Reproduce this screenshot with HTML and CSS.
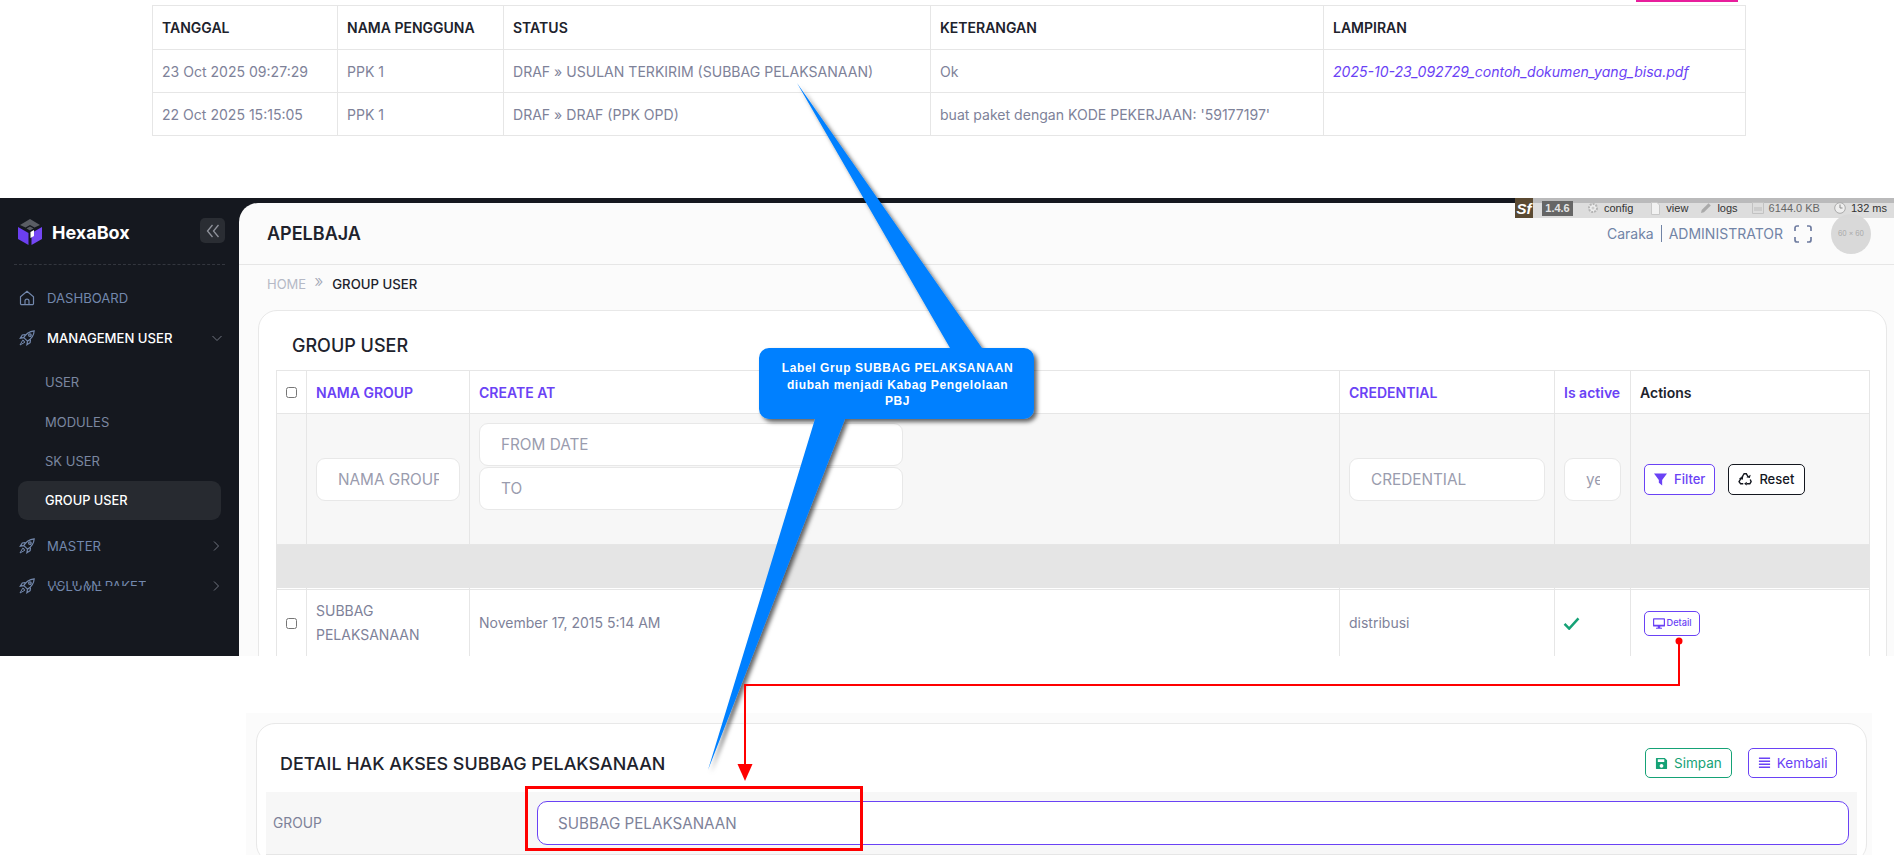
FILE: index.html
```html
<!DOCTYPE html>
<html lang="id">
<head>
<meta charset="utf-8">
<title>APELBAJA</title>
<link rel="stylesheet" href="styles.css">
</head>
<body>
<div class="page">
  <div class="pink-tab"></div>
  <section class="log-section">
    <table class="log">
      <thead>
        <tr><th class="lc1">TANGGAL</th><th class="lc2">NAMA PENGGUNA</th><th class="lc3">STATUS</th><th class="lc4">KETERANGAN</th><th class="lc5">LAMPIRAN</th></tr>
      </thead>
      <tbody>
        <tr><td>23 Oct 2025 09:27:29</td><td>PPK 1</td><td>DRAF » USULAN TERKIRIM (SUBBAG PELAKSANAAN)</td><td>Ok</td><td><a class="file">2025-10-23_092729_contoh_dokumen_yang_bisa.pdf</a></td></tr>
        <tr><td>22 Oct 2025 15:15:05</td><td>PPK 1</td><td>DRAF » DRAF (PPK OPD)</td><td>buat paket dengan KODE PEKERJAAN: '59177197'</td><td></td></tr>
      </tbody>
    </table>
  </section>

  <section class="app">
    <aside class="sidebar">
      <div class="brand">
        <svg class="logo" viewBox="0 0 24 26"><path d="M12 0l10 6-5.500 2.500L12 6 7.500 8.500 2 6z" fill="#5a5d64"/><path d="M12 7.500l3.500 2L12 11.500 8.500 9.500z" fill="#5a5d64"/><path d="M0 8l10.500 6v12L0 20z" fill="#6b3ff0"/><path d="M24 8l-10.500 6v12L24 20z" fill="#7447f5"/><path d="M16 11l-3.500 2v6l3.500-2z" fill="#fff"/></svg>
        <span class="brand-name">HexaBox</span>
        <span class="collapse"><svg viewBox="0 0 16 16"><path d="M7.500 2L2.500 8l5 6M13.500 2l-5 6 5 6" fill="none" stroke="#8f929b" stroke-width="1.300"/></svg></span>
      </div>
      <nav class="menu">
        <a class="item"><svg class="mi" viewBox="0 0 16 16"><path d="M1.500 6.800L8 1.300l6.500 5.500v6.700a1.200 1.200 0 0 1-1.200 1.200H2.700a1.200 1.200 0 0 1-1.200-1.200zM6 14.700v-3.500a2 2 0 0 1 4 0v3.500" fill="none" stroke="#7388ad" stroke-width="1.200"/></svg><span>DASHBOARD</span></a>
        <a class="item item-open"><svg class="mi" viewBox="0 0 16 16"><use href="#rocket"/></svg><span>MANAGEMEN USER</span><svg class="chev" viewBox="0 0 12 12"><path d="M1.500 4L6 8.500 10.500 4" fill="none" stroke="#70747f" stroke-width="1"/></svg></a>
        <a class="sub sub-first">USER</a>
        <a class="sub">MODULES</a>
        <a class="sub">SK USER</a>
        <a class="sub sub-on">GROUP USER</a>
        <a class="item item-master"><svg class="mi" viewBox="0 0 16 16"><use href="#rocket"/></svg><span>MASTER</span><svg class="chev" viewBox="0 0 12 12"><path d="M4 1.500L8.500 6 4 10.500" fill="none" stroke="#70747f" stroke-width="1"/></svg></a>
        <a class="item"><svg class="mi" viewBox="0 0 16 16"><use href="#rocket"/></svg>
          <span class="clash"><span class="clash-top">USULAN PAKET</span><span class="clash-bottom">VOLUME</span></span>
          <svg class="chev" viewBox="0 0 12 12"><path d="M4 1.500L8.500 6 4 10.500" fill="none" stroke="#70747f" stroke-width="1"/></svg></a>
      </nav>
      <svg class="defs" width="0" height="0"><defs><g id="rocket" fill="none" stroke="#7388ad" stroke-width="1.200"><path d="M4.800 7.600C7 3.300 10.500 1.300 15.200.8c-.3 4.500-2.500 8-6.700 10.300z"/><path d="M4.800 7.600L1.300 8.200l2-3.200 3-.4M8.500 11.100l-.6 3.600 3.200-2 .4-3"/><circle cx="10.900" cy="5.100" r="1.300"/><path d="M3.700 10.200l-2.700 4.800 4.800-2.700-.8-.3.300-1z" stroke-width="1"/></g></defs></svg>
    </aside>
    <main class="main">
      <header class="topbar">
        <h1 class="app-title">APELBAJA</h1>
        <div class="who">
          <span>Caraka</span><span class="pipe"></span><span>ADMINISTRATOR</span>
          <svg class="fs" viewBox="0 0 18 18"><path d="M1 6V3a2 2 0 0 1 2-2h2M13 1h2a2 2 0 0 1 2 2v3M17 12v3a2 2 0 0 1-2 2h-2M5 17H3a2 2 0 0 1-2-2v-3" fill="none" stroke="#6f7ca0" stroke-width="1.700"/></svg>
          <span class="avatar">60 × 60</span>
        </div>
      </header>
      <div class="crumbs"><span class="crumb-home">HOME</span><span class="crumb-sep">»</span><span class="crumb-now">GROUP USER</span></div>
      <div class="card group-card">
        <h2 class="card-title">GROUP USER</h2>
        <table class="grid">
          <thead>
            <tr class="head-row">
              <th class="g1"><span class="check"></span></th>
              <th class="g2 lnk">NAMA GROUP</th>
              <th class="g3 lnk">CREATE AT</th>
              <th class="g4"></th>
              <th class="g5 lnk">CREDENTIAL</th>
              <th class="g6 lnk">Is active</th>
              <th class="g7">Actions</th>
            </tr>
            <tr class="filter-row">
              <td></td>
              <td><div class="field"><span>NAMA GROUP</span></div></td>
              <td class="date-cell" colspan="2">
                <div class="field date"><span>FROM DATE</span></div>
                <div class="field date"><span>TO</span></div>
              </td>
              <td><div class="field"><span>CREDENTIAL</span></div></td>
              <td><div class="field"><span>yes</span></div></td>
              <td>
                <div class="actions">
                  <a class="btn btn-violet"><svg class="bi" viewBox="0 0 14 14"><path d="M0 .5h14L8.800 7.500V13.500L5.200 10.500V7.500z" fill="#6a42f5"/></svg>Filter</a>
                  <a class="btn btn-dark"><svg class="bi bi-recycle" viewBox="0 0 16 16"><path d="M4.500 6L7 2h2.500l2 3.500M14 8.500l1 2.500-1.500 2.500H10M6 13.500H3L1.200 11l2.300-4" fill="none" stroke="#14171f" stroke-width="1.600"/><path d="M9.500 6l4 .8 1-3.800zM10 11v4.500l-3-2.200zM1 7.500l4.500 1.300.5-4.100z" fill="#14171f"/></svg>Reset</a>
                </div>
              </td>
            </tr>
            <tr class="gray-row"><td colspan="7"></td></tr>
            <tr class="gap-row"><td></td><td></td><td colspan="2"></td><td></td><td></td><td></td></tr>
          </thead>
          <tbody>
            <tr class="data-row">
              <td><span class="check"></span></td>
              <td>SUBBAG PELAKSANAAN</td>
              <td colspan="2">November 17, 2015 5:14 AM</td>
              <td>distribusi</td>
              <td><svg class="tick" viewBox="0 0 18 14"><path d="M1.500 7.500L6.500 12.500 16.500 1.500" fill="none" stroke="#15a276" stroke-width="2.700"/></svg></td>
              <td><a class="btn btn-violet btn-sm"><svg class="bi-sm" viewBox="0 0 14 12"><path d="M1 0h12a1 1 0 0 1 1 1v7.500a1 1 0 0 1-1 1H1a1 1 0 0 1-1-1V1a1 1 0 0 1 1-1zM1.400 1.400v6.200h11.200V1.400zM3.500 11h7v1h-7zM5.500 9.500h3V11h-3z" fill="#6a42f5" fill-rule="evenodd"/></svg>Detail</a></td>
            </tr>
          </tbody>
        </table>
      </div>
    </main>
  </section>

  <section class="detail-wrap">
    <div class="card detail-card">
      <div class="detail-head">
        <h2 class="detail-title">DETAIL HAK AKSES SUBBAG PELAKSANAAN</h2>
        <div class="detail-btns">
          <a class="btn btn-green"><svg class="bi" viewBox="0 0 14 14"><path d="M1.500 1H10.500l2.500 2.500v9a.5.5 0 0 1-.5.5h-11a.5.5 0 0 1-.5-.5v-11a.5.5 0 0 1 .5-.5zM3 2.500V5.500h7V2.500zM7 7.500a2 2 0 1 0 .01 0z" fill="#15a276" fill-rule="evenodd"/></svg>Simpan</a>
          <a class="btn btn-violet btn-back"><svg class="bi" viewBox="0 0 14 14"><path d="M1 .5h12v1.700H1zM1 3.700h12v1.700H1zM1 6.900h12v1.700H1zM1 10.100h12v1.700H1z" fill="#6a42f5"/></svg>Kembali</a>
        </div>
      </div>
      <div class="detail-row">
        <span class="detail-label">GROUP</span>
        <div class="detail-input">SUBBAG PELAKSANAAN</div>
      </div>
    </div>
  </section>

  <div class="sf-bar">
    <span class="sf-logo">Sf</span>
    <span class="sf-ver">1.4.6</span>
    <span class="sf-item sf-first"><svg class="sf-ic" viewBox="0 0 12 12"><circle cx="6" cy="6" r="4" fill="#eee" stroke="#b5b5b5" stroke-width="2" stroke-dasharray="2 1"/><circle cx="6" cy="6" r="1.500" fill="#ccc"/></svg>config</span>
    <span class="sf-item sf-tight"><svg class="sf-ic sf-ic-narrow" viewBox="0 0 9 13"><path d="M.5.5h5.500l2.500 2.500v9.500H.5z" fill="#f2f2f2" stroke="#c8c8c8"/></svg>view</span>
    <span class="sf-item"><svg class="sf-ic" viewBox="0 0 12 12"><path d="M1 11l.7-3L8.500 1.200l2.300 2.300L4 10.300z" fill="#aaa"/></svg>logs</span>
    <span class="sf-item sf-dim"><svg class="sf-ic" viewBox="0 0 12 12"><path d="M.5.5h11v11H.5z" fill="#ddd" stroke="#c2c2c2"/><path d="M2 6h8M2 8h8" stroke="#bbb"/></svg>6144.0 KB</span>
    <span class="sf-item"><svg class="sf-ic" viewBox="0 0 12 12"><circle cx="6" cy="6" r="5.300" fill="#eee" stroke="#aaa"/><path d="M6 2.500V6h2.500" fill="none" stroke="#888"/></svg>132 ms</span>
  </div>

  <svg class="overlay" viewBox="0 0 1894 855">
    <defs>
      <filter id="callout-shadow" x="-10%" y="-10%" width="120%" height="120%">
        <feDropShadow dx="3" dy="3" stdDeviation="2.200" flood-color="#000" flood-opacity=".6"/>
      </filter>
    </defs>
    <path filter="url(#callout-shadow)" fill="#0080ff" d="M769 348H950L797 83 982 348H1024a10 10 0 0 1 10 10V409a10 10 0 0 1-10 10H845L708 770 815 419H769a10 10 0 0 1-10-10V358a10 10 0 0 1 10-10z"/>
    <g fill="#ff0000">
      <circle cx="1679" cy="641" r="3.500"/>
      <path d="M1678 641h2v45H746v78h-2V684h934z"/>
      <path d="M737.500 764h15L745 781z"/>
    </g>
    <rect x="526.500" y="787.500" width="335" height="62" fill="none" stroke="#ff0000" stroke-width="3"/>
  </svg>
  <div class="callout-text">Label Grup SUBBAG PELAKSANAAN<br>diubah menjadi Kabag Pengelolaan<br>PBJ</div>
</div>
</body>
</html>
```
FILE: styles.css
```css
* { box-sizing: border-box; }
html, body { margin: 0; padding: 0; background: #fff; }
body { font-family: Inter, "Liberation Sans", sans-serif; color: #181c32; }
.page { position: relative; width: 1894px; height: 855px; overflow: hidden; }
h1, h2 { margin: 0; font-weight: 500; }
a { text-decoration: none; }

.pink-tab { position: absolute; left: 1636px; top: 0; width: 102px; height: 1.500px; background: #e81e9c; }

/* top log table */
.log-section { padding: 5px 0 0 152px; height: 198px; }
.log { border-collapse: collapse; table-layout: fixed; width: 1593px; font-size: 14.060px; }
.log th, .log td { border: 1px solid #e6e6e6; padding: 0 9px; text-align: left; height: 43px; }
.log th { font-weight: 600; color: #20222c; height: 44px; font-size: 14px; }
.log td { color: #7e8299; }
.lc1 { width: 185px; }
.lc2 { width: 166px; }
.lc3 { width: 427px; }
.lc4 { width: 393px; }
.lc5 { width: 422px; }
.file { color: #6a42f5; font-style: italic; }

/* app */
.app { display: flex; height: 458px; background: #15181f; overflow: hidden; }
.sidebar { width: 239px; flex: none; padding: 20px 18px 0 14px; position: relative; }
.defs { position: absolute; }
.brand { display: flex; align-items: flex-start; height: 47px; border-bottom: 1px dashed #33363e; margin-right: -4px; }
.logo { width: 24px; height: 26px; margin: 1px 0 0 4px; flex: none; }
.brand-name { color: #fff; font-weight: 700; font-size: 18px; margin: 2px 0 0 10px; line-height: 26px; }
.collapse { margin-left: auto; width: 25px; height: 25px; border-radius: 5px; background: #2a2d33; display: flex; align-items: center; justify-content: center; }
.collapse svg { width: 16px; height: 16px; }
.menu { display: flex; flex-direction: column; font-size: 13.100px; padding-top: 13px; }
.item { display: flex; align-items: center; height: 40px; padding-left: 5px; color: #7388ad; }
.item-open { color: #fff; font-weight: 500; }
.mi { width: 16px; height: 16px; flex: none; margin-right: 12px; }
.chev { width: 12px; height: 12px; margin-left: auto; margin-right: -1px; }
.item-open .chev { margin-right: -2px; }
.sub { display: flex; align-items: center; height: 39.500px; margin-left: 4px; padding-left: 27px; font-size: 13px; color: #7b87a0; }
.sub-first { margin-top: 4px; height: 40px; }
.sub-on { height: 39px; border-radius: 9px; background: #272a30; color: #fff; font-weight: 500; width: 203px; font-size: 12.800px; }
.item-master { margin-top: 5.500px; }
.clash { position: relative; display: block; width: 130px; height: 18px; }
.clash-top, .clash-bottom { position: absolute; left: 0; top: 0; line-height: 18px; overflow: hidden; white-space: nowrap; }
.clash-top { height: 9px; }
.clash-bottom { clip-path: inset(9px 0 0 0); }

/* main */
.main { flex: 1; margin-top: 5px; background: #fbfbfb; border-radius: 19px 0 0 0; min-width: 0; height: 453px; overflow: hidden; }
.topbar { display: flex; align-items: center; justify-content: space-between; height: 62px; border-bottom: 1px solid #e6e6e6; padding: 0 23px 0 28px; }
.app-title { font-size: 18px; font-weight: 600; color: #20222c; }
.who { display: flex; align-items: center; font-size: 14px; color: #7184a6; }
.pipe { width: 1px; height: 17px; background: #7184a6; margin: 0 7px; }
.fs { width: 18px; height: 18px; margin: 0 19px 0 11px; }
.avatar { width: 40px; height: 40px; border-radius: 50%; background: #d9d9d9; color: #a9a9a9; font-size: 7px; display: flex; align-items: center; justify-content: center; }
.crumbs { display: flex; align-items: center; height: 37px; padding-left: 28px; font-size: 13px; }
.crumb-home { color: #b5b9c6; }
.crumb-sep { color: #a2a6b5; margin: -5px 9px 0 8px; font-size: 17px; font-weight: 300; }
.crumb-now { color: #20222c; font-weight: 500; font-size: 13.200px; }

.card { background: #fff; border: 1px solid #e8e8e8; border-radius: 19px; }
.group-card { margin: 8px 7px 0 19px; padding: 11px 17px 0 17px; height: 420px; }
.card-title { font-size: 18px; line-height: 48px; padding-left: 16px; color: #20222c; font-weight: 500; }
.grid { border-collapse: collapse; table-layout: fixed; width: 1593px; font-size: 14px; color: #7e8299; }
.grid th, .grid td { border: 1px solid #e6e6e6; padding: 0 9px; text-align: left; }
.head-row th { height: 43px; font-weight: 600; color: #20222c; }
.grid .lnk { color: #6a42f5; }
.g1 { width: 30px; }
.g2 { width: 163px; }
.g3 { width: 435px; }
.g4 { width: 435px; }
.g5 { width: 215px; }
.g6 { width: 76px; }
.g7 { width: 239px; }
.head-row th.g3 { border-right: 0; }
.head-row th.g4 { border-left: 0; }
.check { display: block; width: 11px; height: 11px; border: 1px solid #767676; border-radius: 2.500px; background: #fff; }
.filter-row td { height: 131px; background: #f7f7f7; }
.field { height: 43px; background: #fff; border: 1px solid #e8e8e8; border-radius: 9px; padding: 0 20px 0 21px; display: flex; align-items: center; color: #9a9cae; font-size: 15.300px; white-space: nowrap; }
.field span { display: block; min-width: 0; overflow: hidden; }
.date-cell { vertical-align: top; padding-top: 9px !important; }
.date { width: 424px; margin-bottom: 1px; }
.actions { display: flex; align-items: center; gap: 12.500px; padding-left: 4px; }
.btn { display: inline-flex; align-items: center; justify-content: center; height: 31px; border-radius: 5px; border: 1px solid; font-size: 13px; font-weight: 500; padding: 0 9px; background: #fff; white-space: nowrap; }
.btn-violet { color: #6a42f5; border-color: #6a42f5; }
.btn-dark { color: #14171f; border-color: #14171f; padding: 0 9.500px; }
.btn-green { color: #15a276; border-color: #15a276; }
.bi { width: 13px; height: 13px; margin-right: 7px; flex: none; }
.bi-recycle { width: 14px; height: 14px; }
.gray-row td { height: 43px; background: #e5e5e5; border-color: #e5e5e5; padding: 0; }
.gap-row td { height: 2px; padding: 0; font-size: 0; line-height: 0; border-bottom-width: 1px; }
.data-row td { height: 67px; line-height: 24px; vertical-align: middle; }
.data-row td:last-child { padding-left: 13px; }
.tick { width: 17px; height: 13px; display: block; margin-left: -1px; }
.btn-sm { height: 25px; font-size: 9.200px; padding: 0 7.500px; }
.bi-sm { width: 12px; height: 11px; margin-right: 2px; }

/* detail */
.detail-wrap { position: absolute; left: 246px; top: 713px; width: 1626px; height: 142px; padding: 10px 5px 0 10px; background: #fbfbfb; }
.detail-card { padding: 0 9px; height: 140px; }
.detail-head { display: flex; justify-content: space-between; align-items: center; height: 68px; padding: 10px 20px 0 14px; }
.detail-title { font-size: 17.900px; color: #20222c; font-weight: 500; }
.detail-btns { display: flex; gap: 16px; }
.detail-btns .btn { font-size: 13.500px; font-weight: 400; height: 30px; padding: 0 9.500px; }
.detail-btns .btn-back { padding: 0 8.500px; }
.detail-btns .bi { margin-right: 6px; }
.detail-row { display: flex; align-items: center; height: 63px; background: #f7f7f7; border-bottom: 1px solid #e6e6e6; padding: 0 8px 0 7px; }
.detail-label { width: 264px; font-size: 13.800px; color: #7e8299; flex: none; }
.detail-input { flex: 1; height: 44px; background: #fff; border: 1px solid #6a42f5; border-radius: 10px; padding-left: 20px; display: flex; align-items: center; font-size: 15.200px; color: #7e8299; }

/* symfony debug bar */
.sf-bar { position: absolute; left: 1515px; top: 198px; width: 379px; height: 20px; display: flex; align-items: center; background: rgba(215,215,215,.85); font-family: "Liberation Sans", sans-serif; font-size: 11px; color: #333; }
.sf-logo { width: 18px; height: 20px; flex: none; background: #5b4a32; color: #fff; font-weight: 700; font-style: italic; font-size: 15px; display: flex; align-items: center; justify-content: center; margin-right: 9px; }
.sf-ver { width: 31px; height: 15px; flex: none; background: #666; color: #e4e4e4; font-weight: 700; display: flex; align-items: center; justify-content: center; margin-right: 14px; }
.sf-item { display: flex; align-items: center; flex: none; margin-right: 14px; white-space: nowrap; }
.sf-first { margin-right: 18px; }
.sf-tight { margin-right: 12px; }
.sf-dim { color: #666; }
.sf-ic { display: block; width: 12px; height: 12px; margin-right: 5px; flex: none; }
.sf-ic-narrow { width: 9px; height: 13px; margin-right: 6px; }

/* annotations */
.overlay { position: absolute; inset: 0; width: 1894px; height: 855px; pointer-events: none; }
.callout-text { position: absolute; left: 770px; top: 360px; width: 255px; text-align: center; font-family: "Liberation Sans", sans-serif; font-weight: 700; font-size: 12px; line-height: 16.500px; color: #fff; letter-spacing: .6px; }
```
